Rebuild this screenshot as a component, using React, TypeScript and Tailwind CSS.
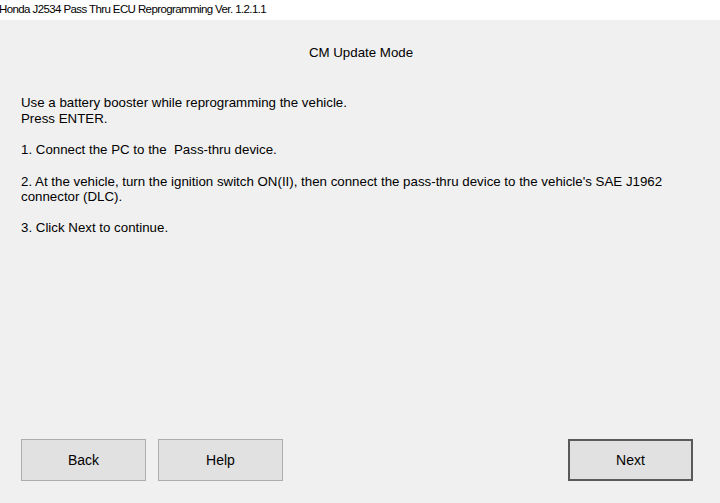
import React from "react";

export default function App() {
  const btn =
    "h-[42px] w-[125px] bg-[#e1e1e1] border border-[#adadad] text-[14px] text-[#000] flex items-center justify-center";
  return (
    <div className="w-[720px] h-[503px] bg-[#f0f0f0] flex flex-col overflow-hidden" style={{ fontFamily: '"Liberation Sans", Arial, sans-serif' }}>
      <div className="h-[20px] bg-white flex items-center shrink-0">
        <span className="text-[11.5px] text-[#000] ml-[-1px] leading-none whitespace-nowrap tracking-[-0.6px]" style={{ fontFamily: '"Liberation Sans", Arial, sans-serif' }}>
          Honda J2534 Pass Thru ECU Reprogramming Ver. 1.2.1.1
        </span>
      </div>
      <div className="flex-1 flex flex-col px-[21px] text-[13.3px] text-[#000] leading-[15px]">
        <div className="text-center mt-[25px] pl-[2px]">CM Update Mode</div>
        <div className="mt-[35px]">Use a battery booster while reprogramming the vehicle.</div>
        <div className="mt-[1px]">Press ENTER.</div>
        <div className="mt-[16px]">1. Connect the PC to the&nbsp; Pass-thru device.</div>
        <div className="mt-[17px]">2. At the vehicle, turn the ignition switch ON(II), then connect the pass-thru device to the vehicle's SAE J1962</div>
        <div>connector (DLC).</div>
        <div className="mt-[16px]">3. Click Next to continue.</div>
        <div className="flex-1" />
        <div className="flex items-center mb-[22px]">
          <button className={btn}>Back</button>
          <button className={btn + " ml-[12px]"}>Help</button>
          <div className="flex-1" />
          <button className="h-[42px] w-[125px] bg-[#e1e1e1] border-2 border-[#5a5a5a] text-[14px] text-[#000] flex items-center justify-center mr-[6px]">Next</button>
        </div>
      </div>
    </div>
  );
}
